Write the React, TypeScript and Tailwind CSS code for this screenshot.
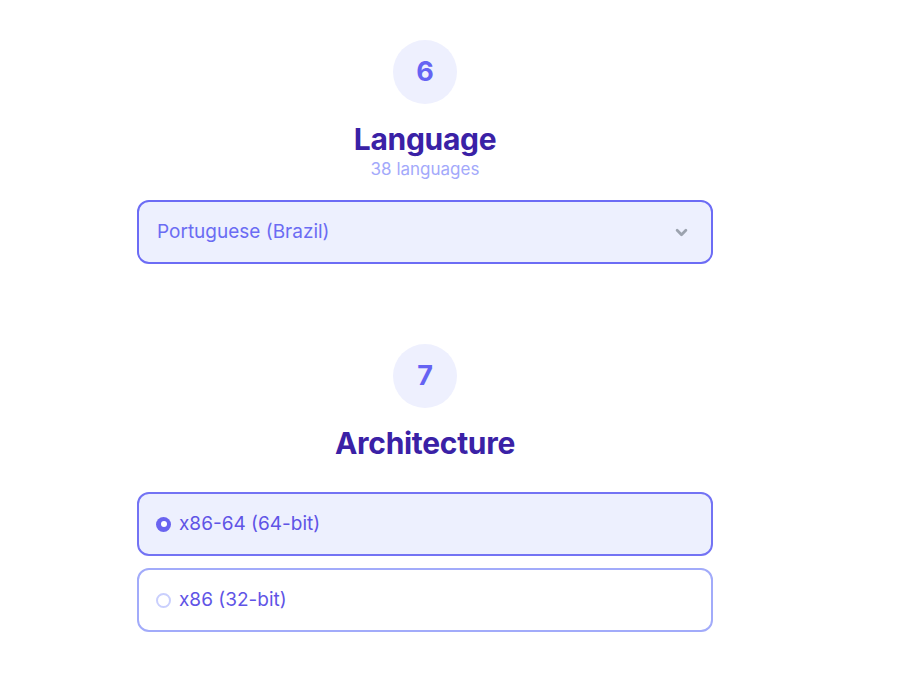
import { useState } from 'react';

const languages = ['English', 'Portuguese (Brazil)', 'Spanish', 'French', 'German'];

const architectures = [
  { id: 'x64', label: 'x86-64 (64-bit)' },
  { id: 'x86', label: 'x86 (32-bit)' },
];

function StepBadge({ n }: { n: number }) {
  return (
    <div className="flex h-16 w-16 items-center justify-center rounded-full bg-[#eef0fe] text-[27px] font-bold text-[#6563f3]">
      {n}
    </div>
  );
}

function Chevron() {
  return (
    <svg width="15" height="15" viewBox="0 0 24 24" fill="none" aria-hidden="true">
      <path d="M5 8.5l7 7 7-7" stroke="#9ca3af" strokeWidth="4.5" strokeLinecap="round" strokeLinejoin="round" />
    </svg>
  );
}

export default function App() {
  const [lang] = useState('Portuguese (Brazil)');
  const [arch, setArch] = useState('x64');

  return (
    <div className="min-h-screen bg-white font-['Inter',sans-serif]">
      <div className="ml-[137px] flex w-[576px] flex-col items-center pt-10">
        <StepBadge n={6} />
        <h2 className="mt-[17px] text-[30px] font-bold leading-9 tracking-[-0.01em] text-[#3a21a6]">Language</h2>
        <p className="text-[17px] leading-6 text-[#a3a9fb]">{languages.length * 7 + 3} languages</p>

        <button
          type="button"
          className="mt-[19px] flex h-16 w-full items-center justify-between rounded-xl border-2 border-[#6c6cf5] bg-[#edf0fe] pl-[18px] pr-[22px] text-left"
        >
          <span className="text-[19px] text-[#6b6cf3]">{lang}</span>
          <Chevron />
        </button>

        <div className="mt-20">
          <StepBadge n={7} />
        </div>
        <h2 className="mt-[17px] text-[30px] font-bold leading-9 tracking-[-0.01em] text-[#3a21a6]">Architecture</h2>

        <div className="mt-[31px] flex w-full flex-col gap-3">
          {architectures.map((a) => {
            const active = a.id === arch;
            return (
              <button
                key={a.id}
                type="button"
                onClick={() => setArch(a.id)}
                className={
                  active
                    ? 'flex h-16 w-full items-center gap-[8px] rounded-xl border-2 border-[#7373f4] bg-[#edf0fe] pl-[17px] text-left'
                    : 'flex h-16 w-full items-center gap-[8px] rounded-xl border-2 border-[#a2abfa] bg-white pl-[17px] text-left'
                }
              >
                <span
                  className={
                    active
                      ? 'flex h-[15px] w-[15px] items-center justify-center rounded-full bg-[#6a64f0]'
                      : 'h-[15px] w-[15px] rounded-full border-2 border-[#c9cffd] bg-white'
                  }
                >
                  {active ? <span className="h-[6px] w-[6px] rounded-full bg-white" /> : null}
                </span>
                <span className="text-[19px] text-[#5f54e6]">{a.label}</span>
              </button>
            );
          })}
        </div>
      </div>
    </div>
  );
}
